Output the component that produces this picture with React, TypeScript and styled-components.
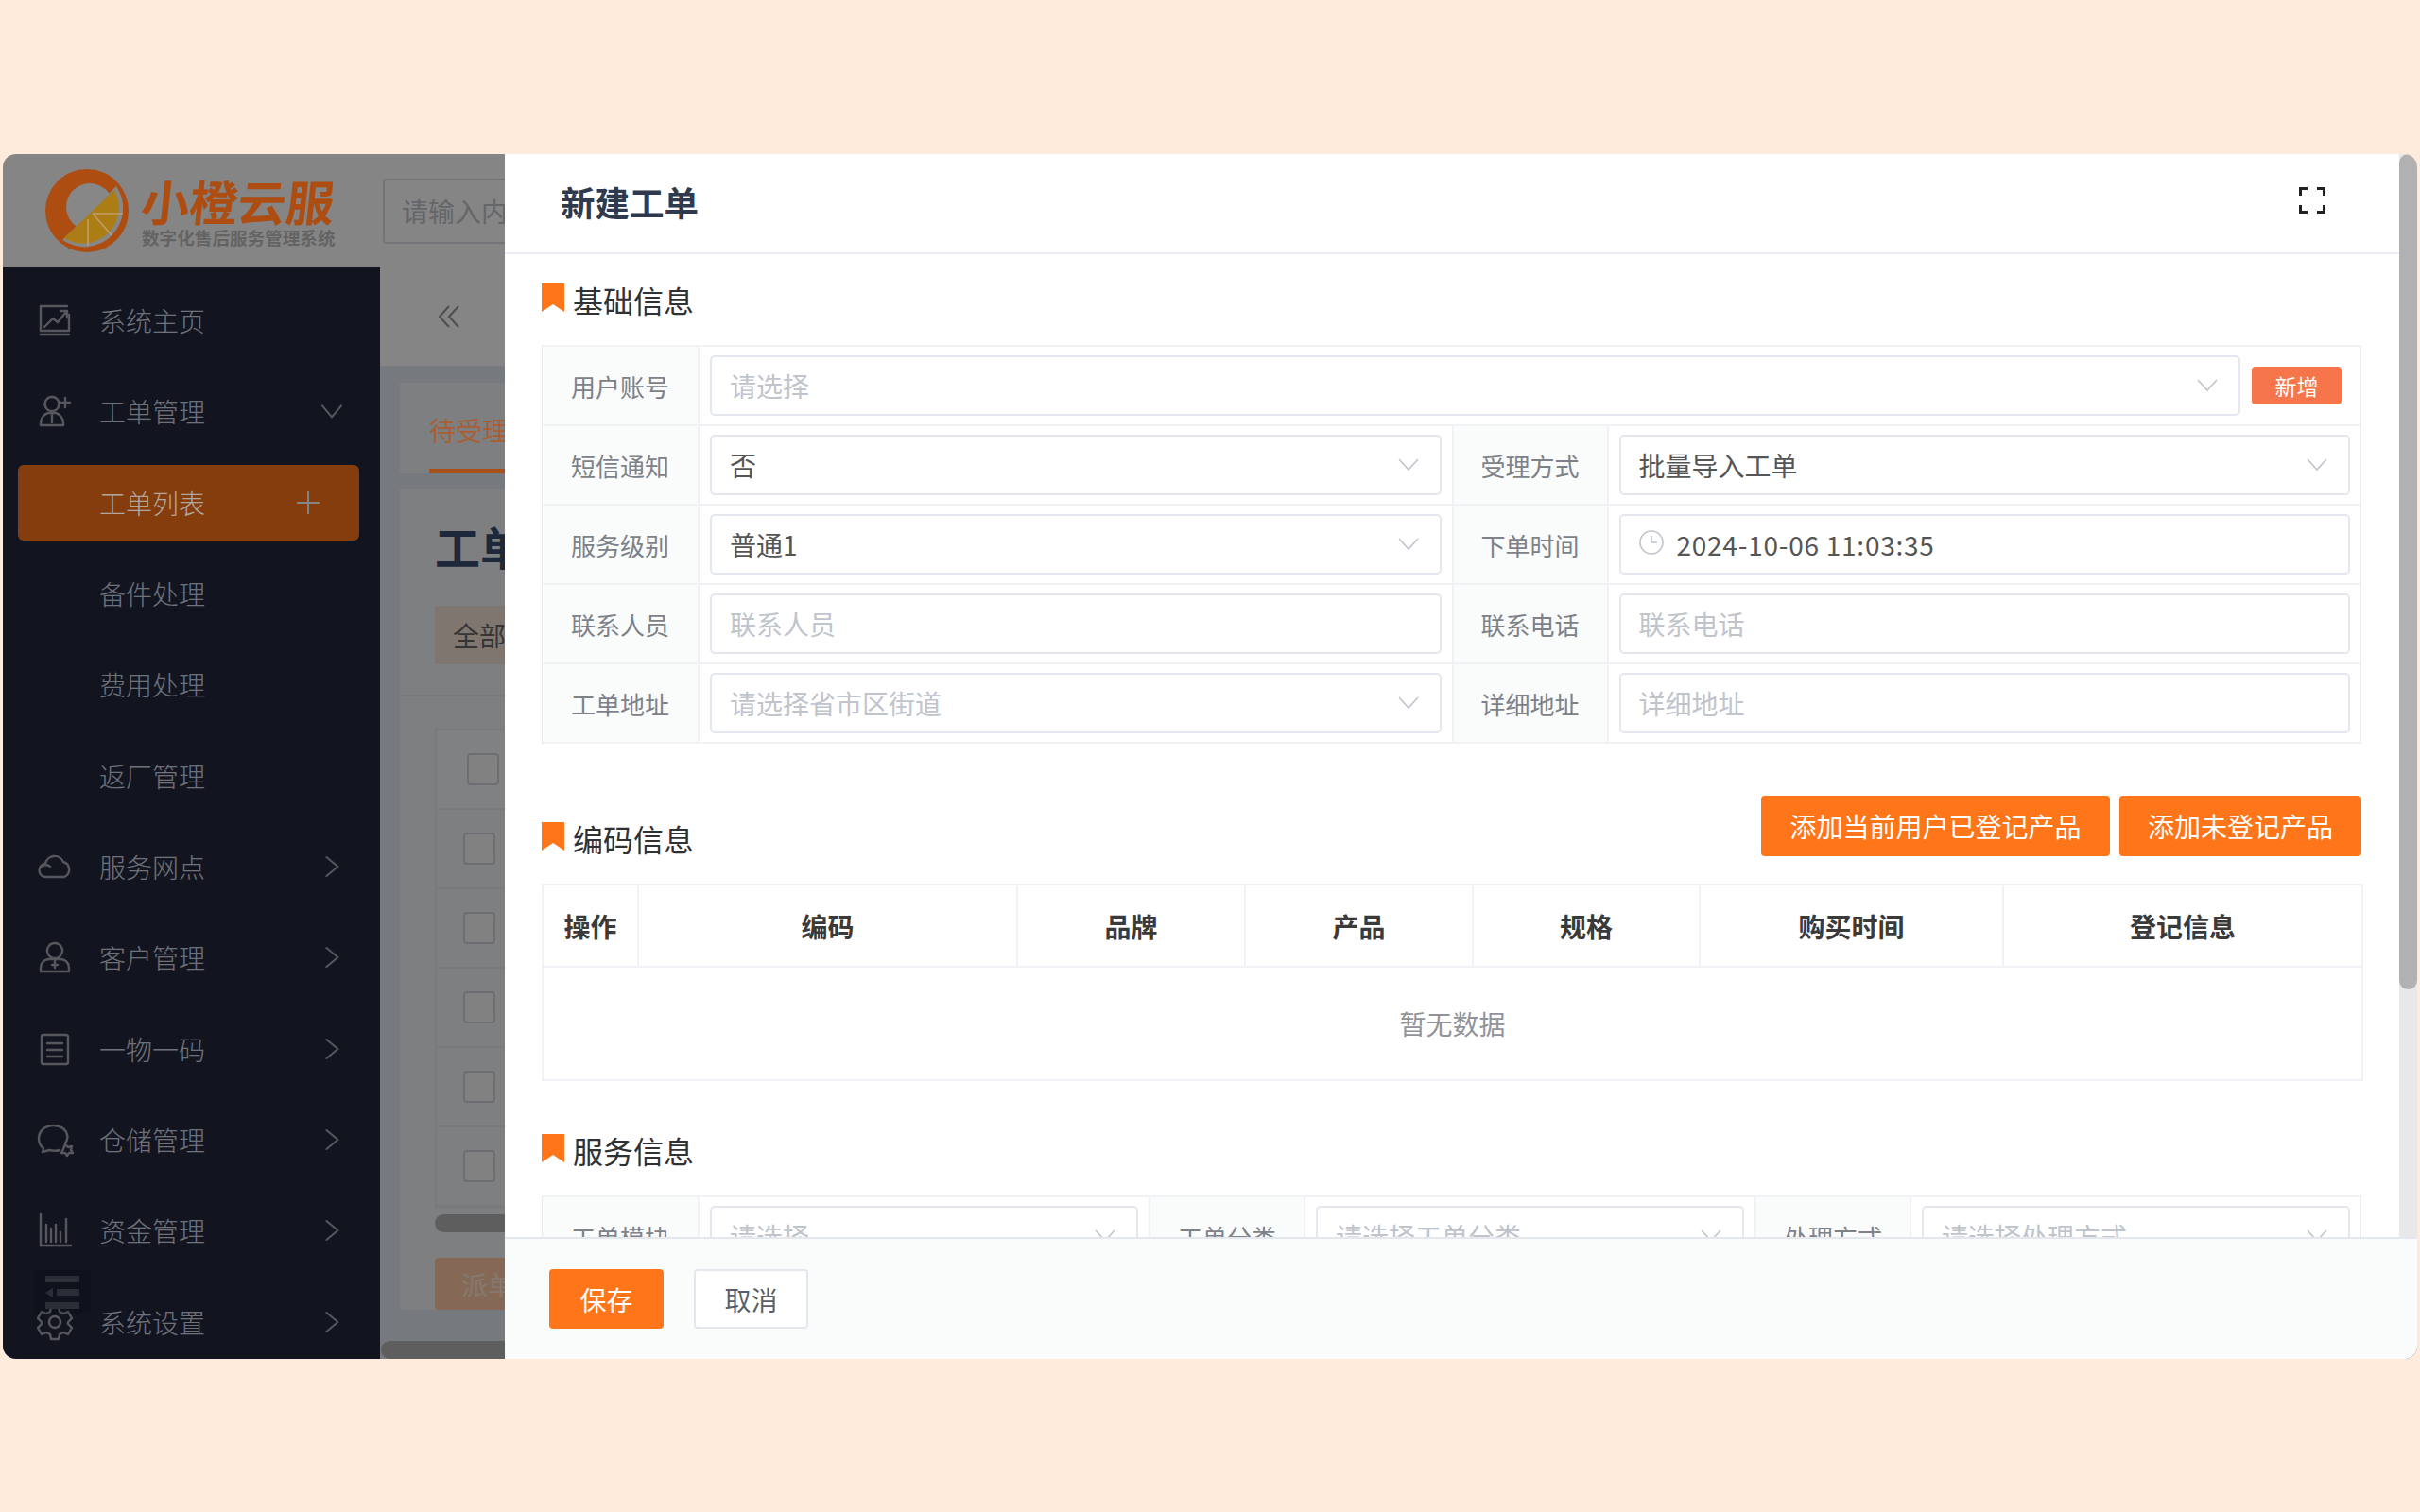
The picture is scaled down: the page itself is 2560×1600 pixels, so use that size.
import React from 'react';
import styled, {createGlobalStyle} from 'styled-components';

const ORANGE = '#ff7519';
const FONT = '"Noto Sans CJK SC", "Noto Sans", sans-serif';

const GlobalStyle = createGlobalStyle`
  html, body {
    margin: 0;
    padding: 0;
    background: #ffebdc;
    font-family: ${FONT};
  }
  * {
    box-sizing: border-box;
  }
`;

const Line: React.FC<{d: string; size?: number; width?: number}> = ({d, size = 40, width = 2.4}) => (
  <svg width={size} height={size} viewBox="0 0 40 40" fill="none" stroke="currentColor" strokeWidth={width} strokeLinecap="round" strokeLinejoin="round">
    <path d={d} />
  </svg>
);

const ICONS: {[key: string]: string} = {
  home: 'M33 5H5v26h30V14M5 35h30M9 27l9-9 5 4 9-11M26 10h7v7',
  ticket: 'M17 5a7.500 7.500 0 1 0 .01 0M5 33c0-6 4-10 8-11h8c4 1 8 5 8 11v2H5zM17 24v8M31 6v10M26 11h10',
  cloud: 'M11 31a7 7 0 0 1-1-14 10 10 0 0 1 19-2 8.500 8.500 0 0 1 1 16zM5 21c2-3 7-4 10-1',
  user: 'M20 5a8 8 0 1 0 .01 0M5 35v-4c0-5 4-9 9-9h12c5 0 9 4 9 9v4zM20 24v7M17 28h6',
  code: 'M11 5H8a2 2 0 0 0-2 2v27a2 2 0 0 0 2 2h24a2 2 0 0 0 2-2V7a2 2 0 0 0-2-2h-3M11 5h18M12 14h16M12 21h16M12 28h16',
  store: 'M19 5C9 5 3 11 3 19c0 5 2 8 5 10l-1 4 7-2c4 1 8 1 11 0M31 24c2-3 3-6 2-9-1-6-7-10-14-10M31 25l3 3 4-1-1 4 2 3-4 0-2 3-2-3-4 0 2-4z',
  money: 'M5 3v33h32M11 14v18M16 18v14M21 14v18M26 22v10M32 8v24',
  gear: 'M20 14a6 6 0 1 0 .01 0M16 4h8l1 5 4 2 5-2 4 7-4 4v2l4 4-4 7-5-2-4 2-1 5h-8l-1-5-4-2-5 2-4-7 4-4v-2l-4-4 4-7 5 2 4-2z',
};

type NavEntry = {label: string; icon?: string; arrow?: 'right' | 'down' | 'plus'; active?: boolean};

const NAV: NavEntry[] = [
  {label: '系统主页', icon: 'home'},
  {label: '工单管理', icon: 'ticket', arrow: 'down'},
  {label: '工单列表', arrow: 'plus', active: true},
  {label: '备件处理'},
  {label: '费用处理'},
  {label: '返厂管理'},
  {label: '服务网点', icon: 'cloud', arrow: 'right'},
  {label: '客户管理', icon: 'user', arrow: 'right'},
  {label: '一物一码', icon: 'code', arrow: 'right'},
  {label: '仓储管理', icon: 'store', arrow: 'right'},
  {label: '资金管理', icon: 'money', arrow: 'right'},
  {label: '系统设置', icon: 'gear', arrow: 'right'},
];

const NavArrow: React.FC<{kind: 'right' | 'down' | 'plus'}> = ({kind}) => {
  const d = kind === 'right' ? 'M13 7.500L28 20 13 32.500' : kind === 'down' ? 'M7.500 13L20 28 32.500 13' : 'M20 6v28M6 20h28';
  return <Line d={d} size={32} width={kind === 'plus' ? 2.4 : 2.6} />;
};

const Logo: React.FC = () => (
  <LogoBox>
    <svg width="88" height="88" viewBox="0 0 88 88">
      <circle cx="44" cy="44" r="44" fill="#ad4d12" />
      <circle cx="47" cy="40" r="25" fill="#878787" />
      <path d="M75 18A41 41 0 0 1 18 75Z" fill="#878787" />
      <path d="M73 22A38 38 0 0 1 20 73Z" fill="#ab7d14" />
      <path d="M50 47H82M50 47L70 70M45 53V81" stroke="#bfa06a" strokeWidth="1.500" fill="none" />
    </svg>
    <LogoText>
      <LogoName>小橙云服</LogoName>
      <LogoSub>数字化售后服务管理系统</LogoSub>
    </LogoText>
  </LogoBox>
);

const Chevron: React.FC = () => (
  <ChevronIcon width="22" height="14" viewBox="0 0 22 14" fill="none" stroke="#c0c4cc" strokeWidth="1.600">
    <path d="M1 1l10 11L21 1" />
  </ChevronIcon>
);

const Field: React.FC<{value?: string; placeholder?: string; select?: boolean; clock?: boolean}> = ({value, placeholder, select, clock}) => (
  <FieldBox>
    {clock && (
      <ClockIcon width="26" height="26" viewBox="0 0 26 26" fill="none" stroke="#c0c4cc" strokeWidth="1.600">
        <circle cx="13" cy="13" r="12" />
        <path d="M13 6v7h6" />
      </ClockIcon>
    )}
    <FieldText $muted={!value} $wide={clock}>
      {value || placeholder}
    </FieldText>
    {select && <Chevron />}
  </FieldBox>
);

const Mark: React.FC = () => (
  <svg width="24" height="30" viewBox="0 0 24 30">
    <path d="M0 0h24v30L12 22 0 30z" fill={ORANGE} />
  </svg>
);

const COLUMNS: [string, number][] = [
  ['操作', 101],
  ['编码', 401],
  ['品牌', 241],
  ['产品', 241],
  ['规格', 240],
  ['购买时间', 321],
  ['登记信息', 380],
];

export default function App() {
  return (
    <Page>
      <GlobalStyle />
      <Frame>
        <Header>
          <Logo />
          <Search>请输入内容</Search>
        </Header>
        <Body>
          <Sidebar>
            {NAV.map(item => (
              <NavRow key={item.label}>
                <NavInner $active={item.active}>
                  <NavIcon>{item.icon && <Line d={ICONS[item.icon]} />}</NavIcon>
                  <NavLabel $active={item.active}>{item.label}</NavLabel>
                  {item.arrow && (
                    <NavEnd $plus={item.arrow === 'plus'}>
                      <NavArrow kind={item.arrow} />
                    </NavEnd>
                  )}
                </NavInner>
              </NavRow>
            ))}
            <Collapse>
              <CollapseBar />
              <CollapseMid>
                <CollapseArrow />
                <CollapseBar />
              </CollapseMid>
              <CollapseBar />
            </Collapse>
          </Sidebar>
          <Main>
            <Toolbar>
              <svg width="22" height="24" viewBox="0 0 22 24" fill="none" stroke="#9a9a9a" strokeWidth="2.200">
                <path d="M11 1L1 12l10 11M21 1L11 12l10 11" />
              </svg>
            </Toolbar>
            <Content>
              <TabCard>
                <Tab>待受理工单</Tab>
              </TabCard>
              <ListCard>
                <ListTitle>工单列表</ListTitle>
                <AllButton>全部工单</AllButton>
                <ListDivider />
                <ListTable>
                  {[0, 1, 2, 3, 4, 5].map(i => (
                    <ListRow key={i} $head={i === 0}>
                      <Check />
                    </ListRow>
                  ))}
                </ListTable>
                <InnerScroll />
                <Dispatch>派单</Dispatch>
              </ListCard>
            </Content>
            <MainScroll />
          </Main>
        </Body>
        <Mask />
        <Drawer>
          <DrawerTop>
            <DrawerMain>
              <DrawerHead>
                <DrawerTitle>新建工单</DrawerTitle>
                <svg width="28" height="28" viewBox="0 0 28 28" fill="none" stroke="#222" strokeWidth="3">
                  <path d="M1.500 9V1.500H9M19 1.500h7.500V9M26.500 19v7.500H19M9 26.500H1.500V19" />
                </svg>
              </DrawerHead>
              <DrawerBody>
                <SectionHead $top={31}>
                  <SectionTitle>
                    <Mark />
                    基础信息
                  </SectionTitle>
                </SectionHead>
                <FormTable>
                  <FormRow>
                    <FormLabel>用户账号</FormLabel>
                    <FormCell $end={20}>
                      <Field placeholder="请选择" select />
                      <AddButton>新增</AddButton>
                    </FormCell>
                  </FormRow>
                  <FormRow>
                    <FormLabel>短信通知</FormLabel>
                    <FormCell>
                      <Field value="否" select />
                    </FormCell>
                    <FormLabel>受理方式</FormLabel>
                    <FormCell>
                      <Field value="批量导入工单" select />
                    </FormCell>
                  </FormRow>
                  <FormRow>
                    <FormLabel>服务级别</FormLabel>
                    <FormCell>
                      <Field value="普通1" select />
                    </FormCell>
                    <FormLabel>下单时间</FormLabel>
                    <FormCell>
                      <Field value="2024-10-06 11:03:35" clock />
                    </FormCell>
                  </FormRow>
                  <FormRow>
                    <FormLabel>联系人员</FormLabel>
                    <FormCell>
                      <Field placeholder="联系人员" />
                    </FormCell>
                    <FormLabel>联系电话</FormLabel>
                    <FormCell>
                      <Field placeholder="联系电话" />
                    </FormCell>
                  </FormRow>
                  <FormRow>
                    <FormLabel>工单地址</FormLabel>
                    <FormCell>
                      <Field placeholder="请选择省市区街道" select />
                    </FormCell>
                    <FormLabel>详细地址</FormLabel>
                    <FormCell>
                      <Field placeholder="详细地址" />
                    </FormCell>
                  </FormRow>
                </FormTable>

                <SectionHead $top={55}>
                  <SectionTitle>
                    <Mark />
                    编码信息
                  </SectionTitle>
                  <HeadButtons>
                    <PrimaryButton $width={369}>添加当前用户已登记产品</PrimaryButton>
                    <PrimaryButton $width={256}>添加未登记产品</PrimaryButton>
                  </HeadButtons>
                </SectionHead>
                <CodeTable>
                  <colgroup>
                    {COLUMNS.map(([name, width]) => (
                      <col key={name} width={width} />
                    ))}
                  </colgroup>
                  <thead>
                    <tr>
                      {COLUMNS.map(([name]) => (
                        <CodeHead key={name}>{name}</CodeHead>
                      ))}
                    </tr>
                  </thead>
                  <tbody>
                    <tr>
                      <EmptyCell colSpan={COLUMNS.length}>暂无数据</EmptyCell>
                    </tr>
                  </tbody>
                </CodeTable>

                <SectionHead $top={56}>
                  <SectionTitle>
                    <Mark />
                    服务信息
                  </SectionTitle>
                </SectionHead>
                <FormTable>
                  <FormRow>
                    <FormLabel>工单模块</FormLabel>
                    <FormCell>
                      <Field placeholder="请选择" select />
                    </FormCell>
                    <FormLabel>工单分类</FormLabel>
                    <FormCell>
                      <Field placeholder="请选择工单分类" select />
                    </FormCell>
                    <FormLabel>处理方式</FormLabel>
                    <FormCell>
                      <Field placeholder="请选择处理方式" select />
                    </FormCell>
                  </FormRow>
                </FormTable>
              </DrawerBody>
            </DrawerMain>
            <ScrollTrack>
              <ScrollThumb />
            </ScrollTrack>
          </DrawerTop>
          <Footer>
            <SaveButton>保存</SaveButton>
            <CancelButton>取消</CancelButton>
          </Footer>
        </Drawer>
      </Frame>
    </Page>
  );
}

const Page = styled.div`
  width: 2560px;
  height: 1600px;
  padding: 163px 3px 0;
  overflow: hidden;
`;

const Frame = styled.div`
  position: relative;
  display: flex;
  flex-direction: column;
  width: 2554px;
  height: 1275px;
  border-radius: 14px;
  overflow: hidden;
  background: #fff;
`;

const Mask = styled.div`
  position: absolute;
  inset: 0;
  z-index: 1;
  background: rgba(0, 0, 0, 0.48);
`;

const Header = styled.div`
  display: flex;
  align-items: center;
  flex: 0 0 120px;
  background: #fff;
`;

const LogoBox = styled.div`
  position: relative;
  z-index: 2;
  display: flex;
  align-items: center;
  gap: 14px;
  width: 402px;
  padding-left: 45px;
`;

const LogoText = styled.div`
  display: flex;
  flex-direction: column;
  width: 206px;
  white-space: nowrap;
`;

const LogoName = styled.div`
  font-size: 51px;
  line-height: 56px;
  font-weight: 700;
  color: #ad4d12;
  transform: skewX(-6deg);
`;

const LogoSub = styled.div`
  font-size: 18.6px;
  line-height: 22px;
  font-weight: 700;
  color: #636363;
`;

const Search = styled.div`
  display: flex;
  align-items: center;
  width: 400px;
  height: 69px;
  padding-left: 18px;
  border: 2px solid #dcdfe6;
  border-radius: 4px;
  font-size: 28px;
  color: #c0c4cc;
`;

const Body = styled.div`
  display: flex;
  flex: 1;
  min-height: 0;
`;

const Sidebar = styled.div`
  position: relative;
  flex: 0 0 399px;
  padding-top: 8px;
  background: #232a3f;
  color: #a4a7b2;
`;

const NavRow = styled.div`
  display: flex;
  align-items: center;
  height: 96.33px;
`;

const NavInner = styled.div<{$active?: boolean}>`
  display: flex;
  align-items: center;
  width: 361px;
  height: 80px;
  margin-left: 16px;
  padding-left: 19px;
  border-radius: 6px;
  background: ${p => (p.$active ? ORANGE : 'transparent')};
  color: ${p => (p.$active ? '#fff' : 'inherit')};
`;

const NavIcon = styled.div`
  display: flex;
  flex: 0 0 40px;
  height: 40px;
  margin-right: 27px;
`;

const NavLabel = styled.div<{$active?: boolean}>`
  position: relative;
  z-index: ${p => (p.$active ? 2 : 'auto')};
  font-size: 28px;
  font-weight: 300;
  color: ${p => (p.$active ? '#b3a79c' : '#d5d9e7')};
`;

const NavEnd = styled.div<{$plus?: boolean}>`
  display: flex;
  margin-left: auto;
  margin-right: ${p => (p.$plus ? 38 : 13)}px;
`;

const Collapse = styled.div`
  position: absolute;
  left: 33px;
  top: 1061px;
  display: flex;
  flex-direction: column;
  justify-content: space-between;
  width: 60px;
  height: 47px;
  padding: 6px 12px;
  background: rgba(0, 0, 0, 0.12);
`;

const CollapseBar = styled.div`
  flex: none;
  width: 100%;
  height: 7px;
  background: #515868;
`;

const CollapseMid = styled.div`
  display: flex;
  align-items: center;
  gap: 4px;

  ${CollapseBar} {
    flex: 1;
    width: auto;
  }
`;

const CollapseArrow = styled.div`
  width: 0;
  height: 0;
  border-top: 5px solid transparent;
  border-bottom: 5px solid transparent;
  border-right: 8px solid #515868;
`;

const Main = styled.div`
  position: relative;
  display: flex;
  flex-direction: column;
  flex: 1;
  min-width: 0;
  overflow: hidden;
  background: #e3e8ef;
`;

const Toolbar = styled.div`
  display: flex;
  align-items: center;
  flex: 0 0 104px;
  padding-left: 62px;
  background: #fff;
`;

const Content = styled.div`
  padding: 18px 0 0 21px;
`;

const TabCard = styled.div`
  height: 96px;
  padding-left: 31px;
  background: #f2f3f5;
`;

const Tab = styled.div`
  position: relative;
  z-index: 2;
  display: inline-block;
  height: 96px;
  padding-top: 30px;
  font-size: 28px;
  line-height: 40px;
  color: #a85f35;
  border-bottom: 5px solid #a8501a;
  white-space: nowrap;
`;

const ListCard = styled.div`
  margin-top: 16px;
  padding: 30px 0 0 37px;
  background: #f2f3f5;
`;

const ListTitle = styled.div`
  font-size: 48px;
  line-height: 60px;
  font-weight: 700;
  color: #39506f;
`;

const AllButton = styled.div`
  display: flex;
  align-items: center;
  width: 220px;
  height: 62px;
  margin-top: 34px;
  padding-left: 19px;
  font-size: 28px;
  background: #f5e3d6;
  color: #666;
`;

const ListDivider = styled.div`
  height: 2px;
  margin: 32px 0 34px -37px;
  background: #e6e8ec;
`;

const ListTable = styled.div`
  border: 2px solid #e8eaee;
`;

const ListRow = styled.div<{$head?: boolean}>`
  display: flex;
  align-items: center;
  height: 84px;
  padding-left: ${p => (p.$head ? 32 : 28)}px;
  border-bottom: 2px solid #e8eaee;
  background: ${p => (p.$head ? '#f6f7f9' : 'transparent')};
`;

const Check = styled.div`
  width: 34px;
  height: 34px;
  border: 2px solid #d0d3da;
  border-radius: 4px;
  background: #f7f7f8;
`;

const InnerScroll = styled.div`
  height: 19px;
  margin-top: 6px;
  border-radius: 10px;
  background: #b5b5b5;
`;

const Dispatch = styled.div`
  display: flex;
  align-items: center;
  width: 200px;
  height: 55px;
  margin-top: 27px;
  padding-left: 28px;
  border-radius: 4px;
  font-size: 28px;
  background: #ffcaa6;
  color: #ffe7d6;
`;

const MainScroll = styled.div`
  position: absolute;
  left: 1px;
  right: 0;
  bottom: 0;
  height: 19px;
  border-radius: 10px;
  background: #b5b5b5;
`;

const Drawer = styled.div`
  position: absolute;
  top: 0;
  right: 0;
  bottom: 0;
  z-index: 3;
  display: flex;
  flex-direction: column;
  width: 2023px;
  background: #fff;
  border-radius: 0 14px 14px 0;
  overflow: hidden;
`;

const DrawerTop = styled.div`
  display: flex;
  flex: 1;
  min-height: 0;
`;

const DrawerMain = styled.div`
  flex: 1;
  min-width: 0;
  overflow: hidden;
`;

const DrawerHead = styled.div`
  display: flex;
  align-items: center;
  justify-content: space-between;
  height: 106px;
  padding: 0 78px 3px 59px;
  border-bottom: 2px solid #ebeef5;

  svg {
    margin-bottom: 3px;
  }
`;

const DrawerTitle = styled.div`
  font-size: 36.5px;
  font-weight: 700;
  color: #303a4e;
`;

const DrawerBody = styled.div`
  padding: 0 40px 0 39px;
`;

const SectionHead = styled.div<{$top: number}>`
  display: flex;
  align-items: flex-end;
  justify-content: space-between;
  margin-top: ${p => p.$top}px;
  margin-bottom: 29px;
`;

const SectionTitle = styled.div`
  display: flex;
  align-items: flex-start;
  gap: 9px;
  height: 30px;
  margin-bottom: 6px;
  font-size: 32px;
  line-height: 34px;
  color: #303133;
`;

const HeadButtons = styled.div`
  display: flex;
  gap: 10px;
`;

const PrimaryButton = styled.div<{$width: number}>`
  display: flex;
  align-items: center;
  justify-content: center;
  width: ${p => p.$width}px;
  height: 64px;
  border-radius: 4px;
  background: ${ORANGE};
  color: #fff;
  font-size: 28px;
`;

const FormTable = styled.div`
  border-top: 2px solid #f0f2f6;
  border-left: 1px solid #e9ecf2;
  border-right: 1px solid #e9ecf2;
`;

const FormRow = styled.div`
  display: flex;
  height: 84px;
  border-bottom: 2px solid #f0f2f6;
`;

const FormLabel = styled.div`
  display: flex;
  align-items: center;
  justify-content: center;
  flex: 0 0 166px;
  border-right: 2px solid #f0f2f6;
  border-left: 2px solid #f0f2f6;
  background: #fafbfb;
  font-size: 26px;
  color: #7d8188;

  &:first-child {
    border-left: 0;
  }
`;

const FormCell = styled.div<{$end?: number}>`
  display: flex;
  align-items: center;
  flex: 1;
  min-width: 0;
  gap: 12px;
  padding: 0 ${p => p.$end ?? 11}px 0 11px;
`;

const FieldBox = styled.div`
  display: flex;
  align-items: center;
  flex: 1;
  min-width: 0;
  height: 64px;
  padding: 0 22px 0 19px;
  border: 2px solid #e4e7ed;
  border-radius: 5px;
  background: #fff;
`;

const FieldText = styled.div<{$muted: boolean; $wide?: boolean}>`
  font-size: 28px;
  letter-spacing: ${p => (p.$wide ? 0.75 : 0)}px;
  color: ${p => (p.$muted ? '#c0c4cc' : '#555')};
  white-space: nowrap;
`;

const ChevronIcon = styled.svg`
  margin-left: auto;
`;

const ClockIcon = styled.svg`
  margin-right: 14px;
  margin-top: -4px;
`;

const AddButton = styled.div`
  display: flex;
  align-items: center;
  justify-content: center;
  flex: 0 0 95px;
  height: 40px;
  border-radius: 4px;
  background: #f7754a;
  color: #fff;
  font-size: 23px;
`;

const CodeTable = styled.table`
  width: 1925px;
  table-layout: fixed;
  border-collapse: collapse;
`;

const CodeHead = styled.th`
  height: 87px;
  padding: 0;
  border: 2px solid #f0f2f6;
  font-size: 28px;
  font-weight: 700;
  color: #3a3a3a;
  text-align: center;
`;

const EmptyCell = styled.td`
  height: 120px;
  padding: 0;
  border: 2px solid #f0f2f6;
  font-size: 28px;
  color: #909399;
  text-align: center;
`;

const ScrollTrack = styled.div`
  flex: 0 0 19px;
  background: #e8e8e8;
`;

const ScrollThumb = styled.div`
  height: 884px;
  border-radius: 10px;
  background: #b1b1b1;
`;

const Footer = styled.div`
  display: flex;
  align-items: center;
  gap: 32px;
  flex: 0 0 129px;
  padding-left: 47px;
  border-top: 2px solid #e4e7ed;
  background: #fafbfb;
`;

const SaveButton = styled.div`
  display: flex;
  align-items: center;
  justify-content: center;
  width: 121px;
  height: 63px;
  border-radius: 4px;
  background: ${ORANGE};
  color: #fff;
  font-size: 28px;
`;

const CancelButton = styled(SaveButton)`
  border: 2px solid #e4e7ed;
  background: #fff;
  color: #5c5f66;
`;
